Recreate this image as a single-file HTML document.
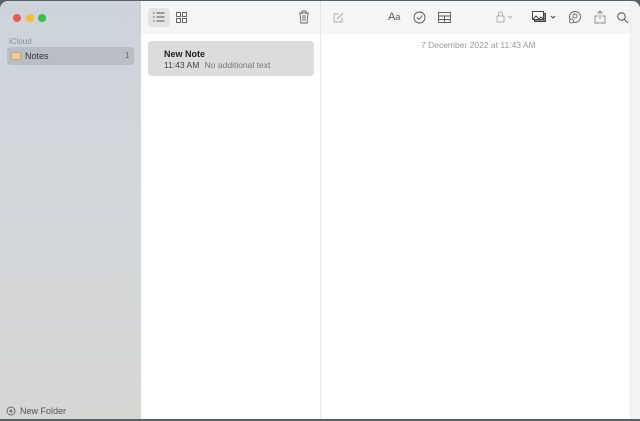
<!DOCTYPE html><html><head><style>
*{margin:0;padding:0;box-sizing:border-box}
body{width:640px;height:421px;overflow:hidden;font-family:"Liberation Sans",sans-serif;background:#5a5f66;position:relative}
.win{position:absolute;left:0;top:1px;width:640px;height:418px;background:#fff;overflow:hidden;border-radius:8px 8px 0 0}
.side{position:absolute;left:0;top:0;width:141px;height:418px;background:linear-gradient(180deg,#ccd3db 0%,#d3d7db 50%,#d6d6d3 100%)}
.list{position:absolute;left:141px;top:0;width:179px;height:418px;background:#fff}
.tb{position:absolute;left:141px;top:0;width:490px;height:33px;background:#f6f6f6}
.div{position:absolute;left:320px;top:0;width:1px;height:418px;background:#e6e6e6}
.edge{position:absolute;left:630px;top:0;width:10px;height:418px;background:#f3f3f3;border-left:1px solid #ececec}
.dot{position:absolute;top:13px;width:8px;height:8px;border-radius:50%}
.t{position:absolute;white-space:nowrap}
svg{position:absolute}
</style></head><body><div class="win">
<div class="side"></div>
<div class="list"></div>
<div class="tb"></div>
<div class="div"></div>
<div class="edge"></div>
<div class="dot" style="left:13px;background:#ee5a52"></div>
<div class="dot" style="left:26px;background:#f5bd2e"></div>
<div class="dot" style="left:38px;background:#35c048"></div>
<div class="t" style="left:9px;top:36px;font-size:8px;color:#8a8f96">iCloud</div>
<div style="position:absolute;left:7px;top:46px;width:127px;height:18px;background:#b9bec5;border-radius:4px"></div>
<div style="position:absolute;left:11px;top:51px;width:10px;height:8px;border:1px solid #d4a85a;background:#e8cf9a;border-radius:1px"></div>
<div class="t" style="left:25px;top:50px;font-size:9px;color:#333">Notes</div>
<div class="t" style="left:125px;top:50px;font-size:8px;color:#666">1</div>
<svg style="left:6px;top:405px" width="10" height="10"><circle cx="5" cy="5" r="4" fill="none" stroke="#666" stroke-width=".9"/><path d="M5 3v4M3 5h4" stroke="#666" stroke-width=".9"/></svg>
<div class="t" style="left:20px;top:405px;font-size:9px;color:#555">New Folder</div>
<div style="position:absolute;left:148px;top:7px;width:22px;height:19px;background:#e4e4e4;border-radius:4px"></div>
<svg style="left:153px;top:11px" width="12" height="10" stroke="#555" stroke-width="1"><path d="M0 1h1.5M0 5h1.5M0 9h1.5M3.5 1h8M3.5 5h8M3.5 9h8"/></svg>
<svg style="left:176px;top:11px" width="11" height="11" fill="none" stroke="#555" stroke-width=".9"><rect x=".5" y=".5" width="4" height="4"/><rect x="6.5" y=".5" width="4" height="4"/><rect x=".5" y="6.5" width="4" height="4"/><rect x="6.5" y="6.5" width="4" height="4"/></svg>
<svg style="left:298px;top:9px" width="12" height="14" fill="none" stroke="#666" stroke-width=".9"><path d="M1 3h10M4 3V1h4v2M2 3l1 10h6l1-10M5 5v6M7 5v6"/></svg>
<div style="position:absolute;left:148px;top:40px;width:166px;height:35px;background:#dcdcdc;border-radius:4px"></div>
<div class="t" style="left:164px;top:48px;font-size:9px;font-weight:bold;color:#222">New Note</div>
<div class="t" style="left:164px;top:59px;font-size:8.5px;color:#444">11:43 AM <span style="color:#777;margin-left:3px">No additional text</span></div>
<svg style="left:333px;top:11px" width="11" height="11" fill="none" stroke="#aaa" stroke-width=".9"><path d="M1 2h5M1 2v8h8V5M4 7l6-6"/></svg>
<div class="t" style="left:388px;top:10px;font-size:11px;color:#555">A<span style="font-size:9px">a</span></div>
<svg style="left:413px;top:10px" width="13" height="13" fill="none" stroke="#555" stroke-width=".9"><circle cx="6.5" cy="6.5" r="5.5"/><path d="M4 6.5l2 2 3.5-4"/></svg>
<svg style="left:438px;top:11px" width="13" height="11" fill="none" stroke="#555" stroke-width=".9"><rect x=".5" y=".5" width="12" height="10"/><path d="M.5 4h12M.5 7.5h12M6.5 4v6.5"/></svg>
<svg style="left:496px;top:10px" width="22" height="12" fill="none" stroke="#aaa" stroke-width=".9"><rect x="1" y="5" width="7" height="6"/><path d="M2.5 5V3a2 2 0 014 0v2M12 5l2 2 2-2"/></svg>
<svg style="left:532px;top:10px" width="26" height="12" fill="none" stroke="#444" stroke-width="1"><rect x="2.5" y="2.5" width="11" height="8" fill="#888"/><rect x=".5" y=".5" width="11" height="8" fill="#fff"/><path d="M1 8l3-3 3 3 2-2 2 2"/><path d="M19 5l2 2 2-2"/></svg>
<svg style="left:568px;top:10px" width="14" height="13" fill="none" stroke="#666" stroke-width=".9"><circle cx="7" cy="6" r="5.5"/><circle cx="7" cy="5" r="2"/><circle cx="3.5" cy="10" r="2" fill="#fff"/></svg>
<svg style="left:594px;top:9px" width="12" height="14" fill="none" stroke="#888" stroke-width=".9"><path d="M6 1v8M3.5 3.5L6 1l2.5 2.5M4 6H1v7h10V6H8"/></svg>
<svg style="left:617px;top:11px" width="12" height="12" fill="none" stroke="#555" stroke-width="1"><circle cx="4.5" cy="4.5" r="3.7"/><path d="M7.3 7.3l3.8 3.8"/></svg>
<div class="t" style="left:421px;top:39px;font-size:8.5px;color:#999">7 December 2022 at 11:43 AM</div>
</div></body></html>
